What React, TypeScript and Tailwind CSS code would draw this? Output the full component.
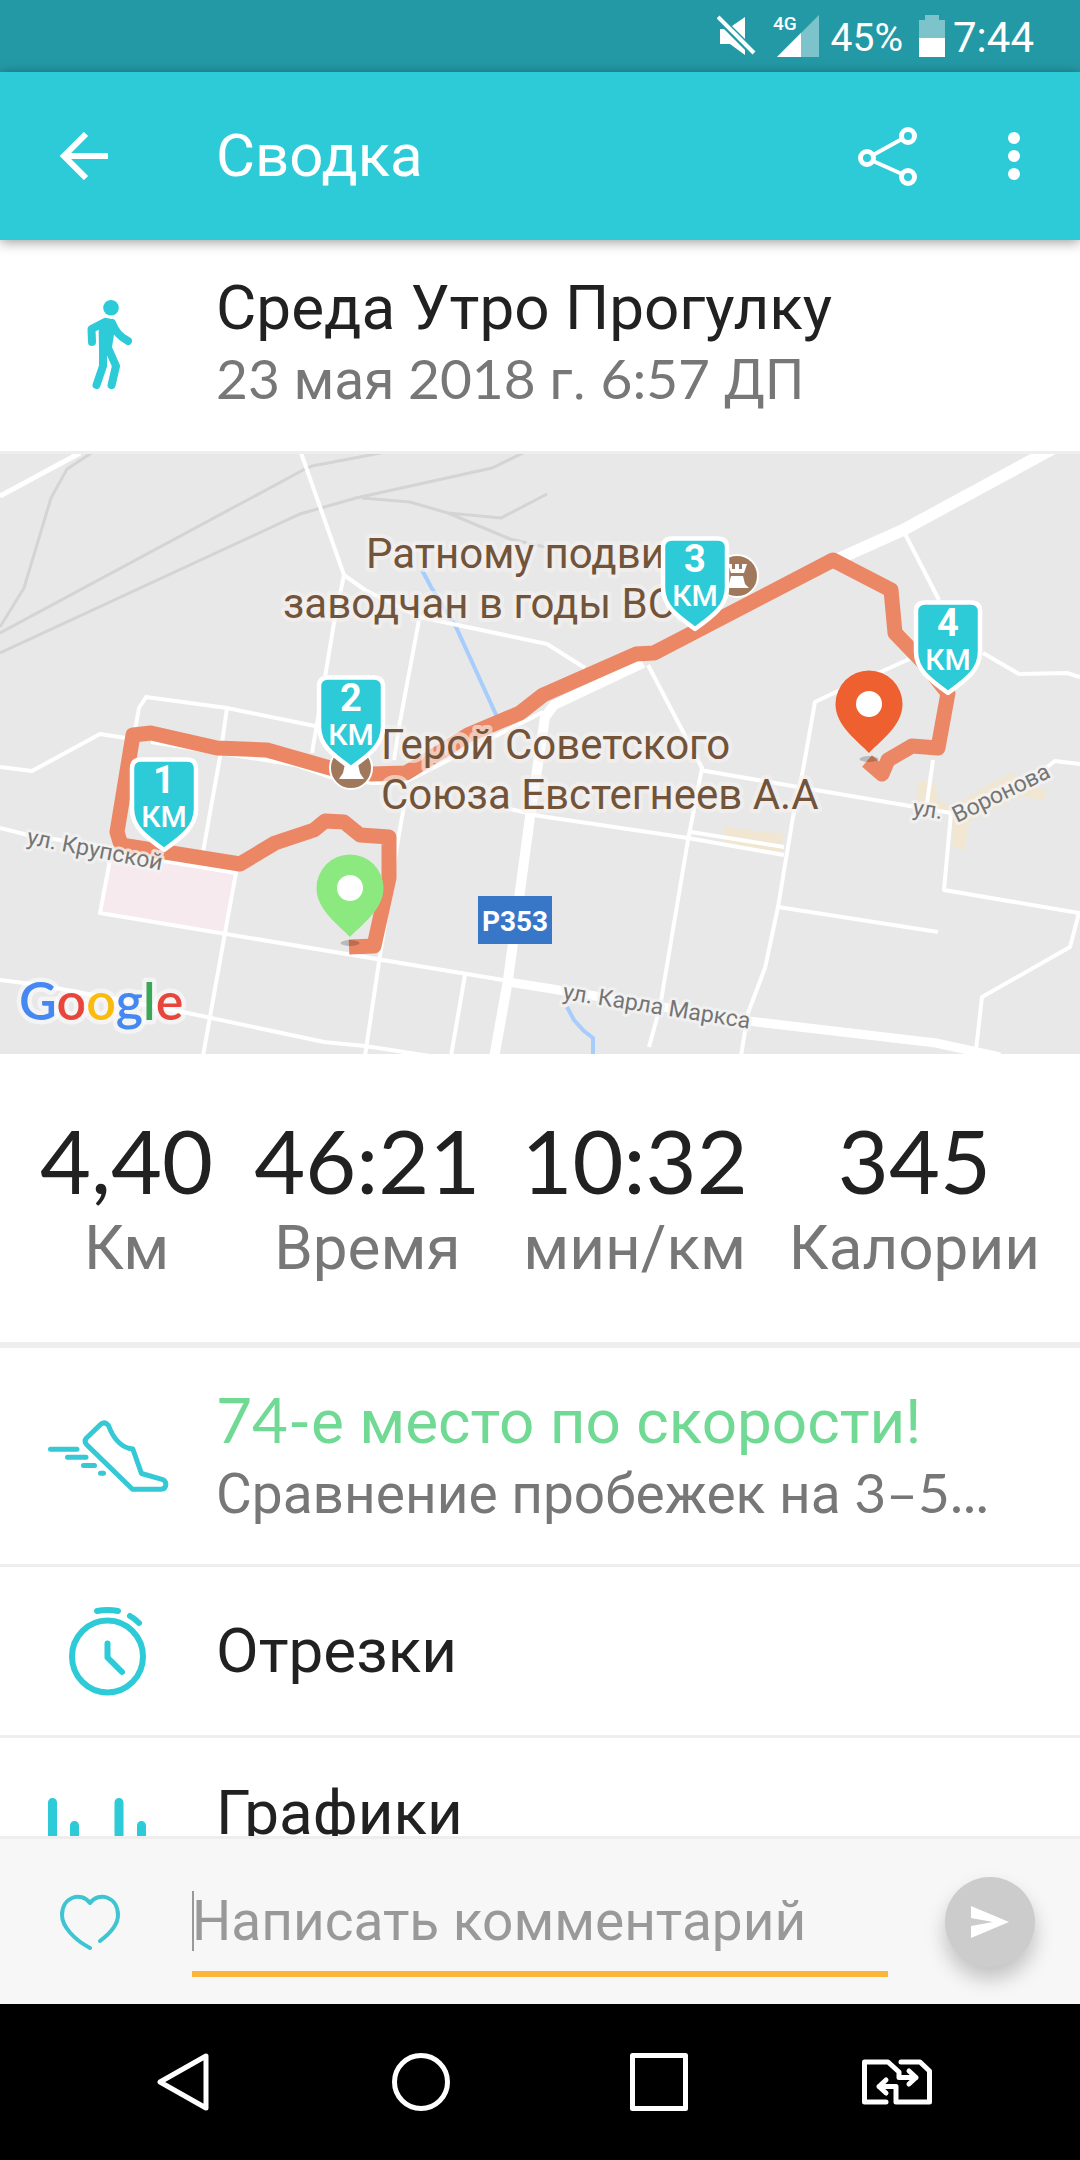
import React, { useState } from 'react';

const ROUTE =
  'M349 947 L374 946 L389 878 L389 837 L360 835 L344 822 L325 821 L314 830 L275 843 L240 864 L165 852 L121 845 L117 832 L133 735 L151 733 L217 748 L267 750 L330 768 L372 774 L406 773 L468 735 L520 713 L543 695 L636 654 L654 653 L833 560 L891 590 L895 633 L924 663 L948 693 L938 748 L912 746 L888 760 L882 774 L867 761';

const RAILS = [
  'M93 452 L67 469 L51 498 L24 588 L0 627',
  'M0 633 L305 469 L312 466 L386 452',
  'M0 653 L300 514 L356 498 L492 468 L525 452',
  'M362 498 L410 502 L448 513 L501 518 L547 494',
  'M448 513 L510 539 L545 547',
];

const STREETS = [
  'M300 450 L344 575 L334 623 L325 677 L312 753',
  'M344 575 L365 590 L420 617 L547 644 L585 668',
  'M419 620 L399 727 L394 760',
  'M405 800 L398 840 L379 962 L365 1056',
  'M0 767 L32 771 L100 734 L126 738',
  'M135 730 L139 708 L146 697 L227 708 L315 726',
  'M227 708 L220 757 L203 852',
  'M151 742 L296 765 L330 777 L372 783 L403 783 L427 771 L543 712',
  'M903 530 L939 600',
  'M983 653 L1019 674 L1067 673 L1080 677',
  'M914 657 L836 692 L815 702 L803 770 L793 817 L778 907 L765 968 L748 1013 L741 1056',
  'M648 665 L702 768 L688 840 L660 1007 L649 1047',
  'M700 770 L798 787 L951 813',
  'M506 808 L540 816 L688 838 L784 855',
  'M691 832 L784 847',
  'M933 760 L927 803',
  'M951 813 L944 890 L1079 913 L1070 947 L982 997 L976 1050',
  'M951 813 L1046 768 L1055 761 L1080 764',
  'M778 907 L938 932',
  'M0 828 L28 835 L110 848',
  'M110 860 L100 913 L503 980',
  'M110 852 L236 873 L225 933 L203 1056',
  'M0 980 L40 985 L183 1012 L324 1042 L365 1046 L430 1056',
  'M465 975 L451 1056',
];

const KM_MARKS = [
  { n: 1, x: 164, y: 757 },
  { n: 2, x: 351, y: 675 },
  { n: 3, x: 695, y: 536 },
  { n: 4, x: 948, y: 600 },
];

const STATS = [
  { value: '4,40', label: 'Км' },
  { value: '46:21', label: 'Время' },
  { value: '10:32', label: 'мин/км' },
  { value: '345', label: 'Калории' },
];

const Num = ({ children }: { children: React.ReactNode }) => (
  <span className="font-['Lato',sans-serif]">{children}</span>
);

const StatusBar = () => (
  <div className="flex h-18 shrink-0 items-center justify-end bg-[#2499a6] pr-[46px] text-white">
    <svg className="h-[42px] w-10" viewBox="0 0 40 42" fill="#fff">
      <path d="M3 14 H7 L28 35 V40 L13 29 H3 Z" />
      <path d="M15 11 L28 2 V24 Z" />
      <path d="M1 2 L37 38" stroke="#fff" strokeWidth="4" />
    </svg>
    <svg className="ml-4 h-[54px] w-[46px]" viewBox="0 -6 46 54">
      <path d="M4 42 L46 0 V42 Z" fill="#7cc3cb" />
      <path d="M4 42 L28 18 V42 Z" fill="#fff" />
      <text x="0" y="15" fontSize="19" className="fill-white font-['Roboto',sans-serif] font-medium">4G</text>
    </svg>
    <span className="ml-3 pt-1 text-[39px] leading-none">45%</span>
    <svg className="ml-4 h-[42px] w-[26px]" viewBox="0 0 26 42">
      <path d="M6 0 H20 V5 H26 V23 H0 V5 H6 Z" fill="#7cc3cb" />
      <path d="M0 23 H26 V42 H0 Z" fill="#fff" />
    </svg>
    <span className="ml-2 pt-1 text-[42px] leading-none">7:44</span>
  </div>
);

const Header = () => (
  <header className="relative z-10 flex h-42 shrink-0 items-center bg-[#2dcad7] pr-[60px] pl-[60px] text-white shadow-[0_2px_12px_rgba(0,0,0,0.4)]">
    <button aria-label="Назад" className="w-39">
      <svg className="size-12" viewBox="0 0 48 48" fill="none" stroke="#fff" strokeWidth="6">
        <path d="M48 24 H5 M26 2 L4 24 L26 46" />
      </svg>
    </button>
    <h1 className="flex-1 text-[60px] leading-18">Сводка</h1>
    <button aria-label="Поделиться" className="mr-[90px]">
      <svg className="size-[60px]" viewBox="0 0 60 60" fill="none" stroke="#fff" strokeWidth="5">
        <circle cx="9" cy="32" r="6.5" />
        <circle cx="50" cy="10" r="6.5" />
        <circle cx="50" cy="51" r="6.5" />
        <path d="M15 29 L44 13 M15 35 L44 48" strokeWidth="4" />
      </svg>
    </button>
    <button aria-label="Ещё">
      <svg className="h-12 w-3" viewBox="0 0 12 48" fill="#fff">
        <circle cx="6" cy="6" r="6" />
        <circle cx="6" cy="24" r="6" />
        <circle cx="6" cy="42" r="6" />
      </svg>
    </button>
  </header>
);

const WalkIcon = () => (
  <svg className="h-[90px] w-12" viewBox="84 298 48 90" fill="none" stroke="#2dcad7" strokeWidth="8" strokeLinecap="round" strokeLinejoin="round">
    <circle cx="111" cy="306.7" r="7.8" fill="#2dcad7" stroke="none" />
    <path d="M92 341 L91.5 328 L105 321" />
    <path d="M112 322 C116 331 119 335 128 340" />
    <path d="M103 345 V365 L96.5 384" />
    <path d="M108.5 348 L116 365 L111.6 384" />
    <path d="M98.5 321 C104 316 111 316 116 321 L112.5 343 L111 353 L99 350 Z" fill="#2dcad7" stroke="none" />
  </svg>
);

const ShoeIcon = () => (
  <svg className="h-[76px] w-[124px]" viewBox="46 48 124 76" fill="none" stroke="#35c8d5" strokeWidth="5" strokeLinecap="round" strokeLinejoin="round">
    <path d="M101 54 L86.5 68 Q83.5 71.5 87 75 L132.5 119.3 H161 Q166 119 165.800 113.5 Q165.5 110.5 162 109.3 L141.5 103.5 L132.800 79 L129 78.3 Q115.5 74.5 108.5 55.5 Q105 51 101 54 Z" />
    <path d="M50.5 79.3 H77 M67.5 87.3 H86 M83.5 95.6 H94.5 M100.5 103.3 H103.5" />
  </svg>
);

const StopwatchIcon = () => (
  <svg className="h-[90px] w-20" viewBox="68 236 80 90" fill="none" stroke="#2dcad7" strokeWidth="6" strokeLinecap="round" strokeLinejoin="round">
    <ellipse cx="107.5" cy="286.5" rx="35.5" ry="36" />
    <path d="M97 241 Q107.5 239 118 241" />
    <path d="M130 246 Q134.5 248.5 139 253" />
    <path d="M107.5 273.5 V287.5 L122 302" />
  </svg>
);

const ChartIcon = () => (
  <svg className="h-24 w-30" viewBox="48 0 120 96" fill="none" stroke="#2dcad7" strokeWidth="9" strokeLinecap="round">
    <path d="M52.5 4.5 V91 M74.5 27.5 V91 M97 50 V91 M119 4.5 V91 M141.5 27.5 V91 M163.5 60 V91" />
  </svg>
);

const KmMark = ({ n, x, y }: { n: number; x: number; y: number }) => (
  <g transform={`translate(${x} ${y})`} textAnchor="middle" fill="#fff">
    <path
      d="M-23 2.5 H23 Q32 2.5 32 11.5 V52 C32 70 18 80 0 93 C-18 80 -32 70 -32 52 V11.5 Q-32 2.5 -23 2.5 Z"
      fill="#2dcad7"
      stroke="#fff"
      strokeWidth="4.5"
      strokeLinejoin="round"
    />
    <text y="36" fontSize="38" className="font-bold">{n}</text>
    <text y="70" fontSize="30" className="font-medium">КМ</text>
  </g>
);

const Pin = ({ x, y, color }: { x: number; y: number; color: string }) => (
  <g transform={`translate(${x} ${y})`}>
    <ellipse cx="0" cy="55" rx="9.5" ry="3" fill="#000" fillOpacity="0.2" />
    <path d="M0 49 C-11 37 -33.5 22 -33.5 0 A33.5 33.5 0 0 1 33.5 0 C33.5 22 11 37 0 49 Z" fill={color} />
    <circle r="13" fill="#fff" />
  </g>
);

const RouteMap = () => (
  <svg
    className="block h-[600px] w-full bg-[#e8e8e8] font-['Roboto',sans-serif]"
    viewBox="0 454 1080 600"
    preserveAspectRatio="xMidYMid slice"
    role="img"
    aria-label="Карта маршрута"
  >
    <path d="M110 852 L236 873 L225 933 L100 913 Z" fill="#f6eaef" />
    <g fill="#f1e6d1">
      <path d="M724 827 L783 834 L780 856 L724 846 Z" />
      <path d="M918 781 L935 783 L938 801 L952 806 L1012 772 L1023 783 L1046 790 L1045 800 L1020 796 L969 822 L965 849 L953 848 L952 815 L917 804 Z" />
    </g>
    <g fill="none" stroke="#d4d4d4" strokeWidth="3">
      {RAILS.map((d) => <path key={d} d={d} />)}
    </g>
    <g fill="none" stroke="#a6cdfc" strokeWidth="4">
      <path d="M422 570 L431 587 L456 627 L498 719" />
      <path d="M567 1007 L574 1020 L584 1031 L593 1038 V1056" />
    </g>
    <g fill="none" stroke="#fff" strokeWidth="4" strokeLinejoin="round">
      {STREETS.map((d) => <path key={d} d={d} />)}
      <path d="M0 496 L80 453" strokeWidth="5" />
      <path d="M643 663 L554 705 L545 717 L530 817 L508 980 L494 1058" strokeWidth="10" />
      <path d="M508 982 L540 987 L748 1021 L936 1043 L1000 1057" strokeWidth="9" />
      <path d="M1054 448 L903 530 L836 560" strokeWidth="12" />
    </g>
    <path d={ROUTE} fill="none" stroke="#ec8766" strokeWidth="15" strokeLinejoin="round" />

    {/* points of interest */}
    <g stroke="#fff" strokeWidth="2" fill="#a0795d">
      <circle cx="737" cy="576" r="21" />
      <circle cx="351" cy="768" r="21" />
    </g>
    <path d="M728 564 h4 v5 h3 v-5 h4 v5 h3 v-5 h5 l-3 9 h-13 Z M731 576 h12 l2 8 l4 4 h-21 l1 -4 Z" fill="#fff" />
    <path d="M345 764 h13 l2 9 l4 6 h-25 l4 -6 Z" fill="#fff" />

    <g fontSize="42" fill="#72543a" stroke="#f6f3f1" strokeOpacity="0.6" strokeWidth="8" strokeLinejoin="round" className="[paint-order:stroke]">
      <text x="366" y="568">Ратному подвигу</text>
      <text x="283" y="618">заводчан в годы ВОВ</text>
      <text x="381" y="759">Герой Советского</text>
      <text x="381" y="809">Союза Евстегнеев А.А</text>
    </g>
    <g fontSize="23" fill="#757575" stroke="#f3f3f3" strokeOpacity="0.8" strokeWidth="6" strokeLinejoin="round" className="[paint-order:stroke]">
      <text transform="translate(26 844) rotate(11)">ул. Крупской</text>
      <text transform="translate(562 999) rotate(9)">ул. Карла Маркса</text>
      <text transform="translate(912 815) rotate(8)">ул.</text>
      <text transform="translate(957 823) rotate(-26)">Воронова</text>
    </g>

    <rect x="478" y="896" width="74" height="48" fill="#3877c8" />
    <text x="515" y="931" textAnchor="middle" fontSize="28" fill="#fff" className="font-bold">Р353</text>

    <Pin x={350} y={888} color="#8ce97f" />
    <Pin x={869} y={704} color="#ee6030" />
    {KM_MARKS.map((m) => <KmMark key={m.n} {...m} />)}

    <text x="19" y="1020" fontSize="52" stroke="#fff" strokeOpacity="0.5" strokeWidth="9" strokeLinejoin="round" className="font-['Lato',sans-serif] font-semibold [paint-order:stroke]">
      <tspan fill="#4688f1">G</tspan>
      <tspan fill="#e8453c">o</tspan>
      <tspan fill="#f9bb0d">o</tspan>
      <tspan fill="#4688f1">g</tspan>
      <tspan fill="#3aa757">l</tspan>
      <tspan fill="#e8453c">e</tspan>
    </text>
  </svg>
);

const CommentBar = () => {
  const [comment, setComment] = useState('');

  return (
    <form
      onSubmit={(e) => e.preventDefault()}
      className="flex h-42 shrink-0 items-center border-t-3 border-[#eeeeee] bg-[#f7f7f7] pr-[45px] pl-[60px]"
    >
      <button type="button" aria-label="Нравится">
        <svg className="h-14 w-[60px]" viewBox="0 0 60 56" fill="none" stroke="#3fc5d1" strokeWidth="4" strokeLinecap="round" strokeLinejoin="round">
          <path d="M40 47 C52 38 58 29 58 21 C58 3 39 -3 30 9 C21 -3 2 3 2 21 C2 33 15 46 30 54" />
        </svg>
      </button>
      <div className="relative mr-[57px] ml-18 flex-1">
        <input
          type="text"
          aria-label="Комментарий"
          value={comment}
          onChange={(e) => setComment(e.target.value)}
          placeholder="Написать комментарий"
          className="block h-[110px] w-full border-b-6 border-[#fbb53a] bg-transparent pt-1 text-[55px] text-[#212121] outline-none placeholder:text-[#999999] placeholder:opacity-100"
        />
        {!comment && <span className="absolute top-6 left-0 h-15 w-[2px] bg-[#999999]" />}
      </div>
      <button
        type="submit"
        aria-label="Отправить"
        className="flex size-[90px] items-center justify-center rounded-full bg-[#cccccc] shadow-[0_12px_20px_rgba(0,0,0,0.22)]"
      >
        <svg className="h-8 w-[38px]" viewBox="0 0 38 32" fill="#fff">
          <path d="M0 0 L38 16 L0 32 V20 L22 16 L0 12 Z" />
        </svg>
      </button>
    </form>
  );
};

const NavBar = () => (
  <nav className="grid h-39 shrink-0 grid-cols-4 place-items-center bg-black px-16">
    <button aria-label="Назад">
      <svg className="h-[58px] w-[52px]" viewBox="0 0 52 58" fill="none" stroke="#fff" strokeWidth="5" strokeLinejoin="round">
        <path d="M49 3 V55 L3 29 Z" />
      </svg>
    </button>
    <button aria-label="Домой">
      <svg className="size-[58px]" viewBox="0 0 58 58" fill="none" stroke="#fff" strokeWidth="5">
        <circle cx="29" cy="29" r="26.5" />
      </svg>
    </button>
    <button aria-label="Недавние">
      <svg className="size-[58px]" viewBox="0 0 58 58" fill="none" stroke="#fff" strokeWidth="5" strokeLinejoin="round">
        <path d="M2.5 2.5 H55.5 V55.5 H2.5 Z" />
      </svg>
    </button>
    <button aria-label="Переключить SIM">
      <svg className="h-[46px] w-[70px]" viewBox="0 0 70 46" fill="none" stroke="#fff" strokeWidth="5" strokeLinecap="round" strokeLinejoin="round">
        <path d="M24 43 H2.5 V3 H26 L37 13 V18.5 H54 M47 12 L54 18.5 L47 25" />
        <path d="M39 3 H58 L67.5 12 V43 H34 V27.5 H17 M24 21 L17 27.5 L24 34" />
      </svg>
    </button>
  </nav>
);

export default function App() {
  return (
    <div className="flex h-screen flex-col bg-white font-['Roboto',sans-serif] text-[#212121]">
      <StatusBar />
      <Header />

      <main className="min-h-0 flex-1 overflow-hidden">
        <section className="flex h-[214px] items-center border-b-3 border-[#eeeeee] pb-1">
          <div className="flex w-54 shrink-0 justify-center">
            <WalkIcon />
          </div>
          <div>
            <h2 className="text-[62px] leading-[70px]">Среда Утро Прогулку</h2>
            <p className="text-[55px] leading-[70px] text-[#777777]">
              <Num>23</Num> мая <Num>2018</Num> г. <Num>6:57</Num> ДП
            </p>
          </div>
        </section>

        <RouteMap />

        <dl className="flex justify-between border-b-6 border-[#eeeeee] px-10 pt-[58px] pb-[54px] text-center">
          {STATS.map((s) => (
            <div key={s.label} className="flex flex-col-reverse">
              <dt className="text-[62px] leading-20 text-[#777777]">{s.label}</dt>
              <dd className="font-['Lato',sans-serif] text-[88px] leading-24">{s.value}</dd>
            </div>
          ))}
        </dl>

        <a href="#rank" className="flex h-[219px] items-center border-b-3 border-[#eeeeee]">
          <div className="flex w-54 shrink-0 justify-center">
            <ShoeIcon />
          </div>
          <div>
            <p className="text-[62px] leading-[70px] text-[#70d993]">
              <Num>74-</Num>е место по скорости!
            </p>
            <p className="text-[55px] leading-[70px] text-[#777777]">
              Сравнение пробежек на <Num>3–5...</Num>
            </p>
          </div>
        </a>

        <a href="#splits" className="flex h-[171px] items-center border-b-3 border-[#eeeeee]">
          <div className="flex w-54 shrink-0 justify-center">
            <StopwatchIcon />
          </div>
          <p className="text-[62px] leading-[70px]">Отрезки</p>
        </a>

        <a href="#charts" className="flex h-[171px] items-start">
          <div className="flex w-54 shrink-0 justify-center pt-15">
            <ChartIcon />
          </div>
          <p className="pt-10 text-[62px] leading-[70px]">Графики</p>
        </a>
      </main>

      <CommentBar />
      <NavBar />
    </div>
  );
}
